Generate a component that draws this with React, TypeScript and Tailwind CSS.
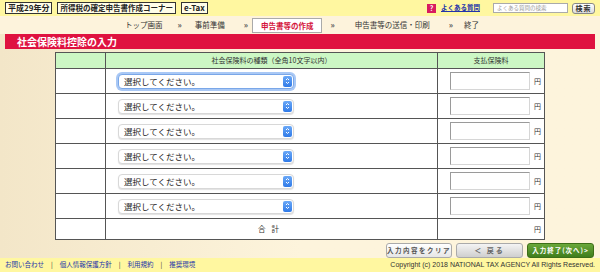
import React from 'react';

const FONT = '"Noto Sans CJK JP", "Noto Sans", "Liberation Sans", sans-serif';

const rows = [0, 1, 2, 3, 4, 5];

const SelectBox: React.FC<{ focused?: boolean }> = ({ focused }) => (
  <div
    className={`ml-[12px] flex h-[15px] w-[176px] items-center justify-between rounded-[4px] border bg-white pl-[5px] pr-[1px] ${
      focused ? 'border-[#7aa7e8] shadow-[0_0_0_2px_#a9c8f5]' : 'border-[#d8d8d8] shadow-[0_1px_1px_rgba(0,0,0,0.12)]'
    }`}
  >
    <span className="text-[8.5px] leading-none text-[#222]">選択してください。</span>
    <span className="flex h-[11px] w-[9px] flex-col items-center justify-center rounded-[2px] bg-gradient-to-b from-[#6aa8f7] to-[#2f7ae8]">
      <svg width="5" height="8" viewBox="0 0 5 8">
        <path d="M1 3 L2.5 1.5 L4 3 M1 5 L2.5 6.5 L4 5" stroke="#fff" strokeWidth="1" fill="none" />
      </svg>
    </span>
  </div>
);

const YenInput = () => (
  <div className="flex items-center justify-end pr-[3px]">
    <div className="h-[18px] w-[80px] border border-[#9a9a9a] border-r-[#d6d6d6] border-b-[#d6d6d6] bg-white" />
    <span className="ml-[4px] text-[7px] text-[#333]">円</span>
  </div>
);

export default function App() {
  return (
    <div
      className="flex h-[272px] w-[600px] flex-col overflow-hidden bg-gradient-to-r from-[#f3e6c8] via-[#fdf4dc] to-[#fdf4dc] text-[#333]"
      style={{ fontFamily: FONT }}
    >
      {/* top bar */}
      <div className="flex h-[16px] items-center bg-[#fff7a0] pl-[5px] pr-[5px]">
        <span className="border border-[#333] bg-[#fffde8] px-[2px] text-[8px] font-bold leading-[10px] text-[#222]">平成29年分</span>
        <span className="ml-[5px] border border-[#333] bg-[#fffde8] px-[2px] text-[7.5px] font-bold leading-[10px] text-[#222]">所得税の確定申告書作成コーナー</span>
        <span className="ml-[5px] border border-[#333] bg-[#fffde8] px-[2px] text-[8px] font-bold leading-[10px] text-[#222]">e-Tax</span>
        <div className="ml-auto flex items-center">
          <span className="flex h-[9px] w-[9px] items-center justify-center bg-[#d81b60] text-[7px] font-bold leading-none text-white">?</span>
          <span className="ml-[5px] text-[6.5px] font-bold text-[#2233aa] underline">よくある質問</span>
          <div className="ml-[13px] flex h-[10px] w-[75px] items-center border border-[#aaa] bg-white pl-[3px] text-[5.5px] text-[#999]">よくある質問の検索</div>
          <div className="ml-[4px] flex h-[11px] w-[23px] items-center justify-center rounded-[3px] border border-[#888] bg-gradient-to-b from-[#ffffff] to-[#dcdcdc] text-[7px] font-bold tracking-[1px] text-[#333]">検索</div>
        </div>
      </div>

      {/* nav */}
      <div className="flex h-[18px] items-center bg-[#fdf3dc] pl-[125px] text-[7.5px] text-[#333]">
        <span>トップ画面</span>
        <span className="ml-[15px] text-[8px] font-bold text-[#555]">»</span>
        <span className="ml-[13px]">事前準備</span>
        <span className="ml-[19px] text-[8px] font-bold text-[#555]">»</span>
        <span className="ml-[4px] border border-[#aaa] bg-white px-[8px] font-bold leading-[13px] text-[#d4143c]">申告書等の作成</span>
        <span className="ml-[8px] text-[8px] font-bold text-[#555]">»</span>
        <span className="ml-[20px]">申告書等の送信・印刷</span>
        <span className="ml-[19px] text-[8px] font-bold text-[#555]">»</span>
        <span className="ml-[11px]">終了</span>
      </div>

      {/* title */}
      <div className="mx-[5px] flex h-[15px] items-center bg-[#df1240] pl-[12px] text-[10px] font-bold text-white">社会保険料控除の入力</div>

      {/* table */}
      <div className="mt-[3px] pl-[55px]">
        <table className="w-[490px] border-collapse text-[7px] text-[#333]">
          <thead>
            <tr className="h-[16px] bg-[#ccf7c4]">
              <th className="w-[50px] border border-[#555]" />
              <th className="w-[332px] border border-[#555] font-normal">社会保険料の種類（全角10文字以内）</th>
              <th className="border border-[#555] font-normal">支払保険料</th>
            </tr>
          </thead>
          <tbody className="bg-white">
            {rows.map((r) => (
              <tr key={r} className="h-[25px]">
                <td className="border border-[#555]" />
                <td className="border border-[#555]">
                  <SelectBox focused={r === 0} />
                </td>
                <td className="border border-[#555]">
                  <YenInput />
                </td>
              </tr>
            ))}
            <tr className="h-[21px]">
              <td className="border border-[#555]" />
              <td className="border border-[#555] text-center text-[7.5px] tracking-[6px]">合計</td>
              <td className="border border-[#555] pr-[3px] text-right text-[7px]">円</td>
            </tr>
          </tbody>
        </table>
      </div>

      {/* buttons */}
      <div className="mt-[3px] flex justify-end gap-[4px] pr-[6px]">
        <div className="flex h-[15px] w-[66px] items-center justify-center rounded-[3px] border border-[#aaa] bg-gradient-to-b from-white to-[#e6e6e6] text-[6.5px] font-bold tracking-[1.5px] text-[#555]">入力内容をクリア</div>
        <div className="flex h-[15px] w-[67px] items-center justify-center rounded-[3px] border border-[#aaa] bg-gradient-to-b from-[#f4f4f4] to-[#cfcfcf] text-[7px] font-bold tracking-[2px] text-[#666]">＜ 戻る</div>
        <div className="flex h-[15px] w-[67px] items-center justify-center rounded-[3px] border border-[#3d6e18] bg-gradient-to-b from-[#6aa83a] to-[#3f7d1c] text-[6.5px] font-bold tracking-[1px] text-white">入力終了(次へ)&gt;</div>
      </div>

      {/* footer */}
      <div className="mt-auto flex h-[14px] items-center bg-[#fff7a0] pl-[5px] pr-[5px] text-[6.5px]">
        <span className="text-[#2233aa]">お問い合わせ</span>
        <span className="mx-[7px] text-[#333]">|</span>
        <span className="text-[#2233aa]">個人情報保護方針</span>
        <span className="mx-[7px] text-[#333]">|</span>
        <span className="text-[#2233aa]">利用規約</span>
        <span className="mx-[7px] text-[#333]">|</span>
        <span className="text-[#2233aa]">推奨環境</span>
        <span className="ml-auto text-[7px] text-[#333]" style={{ fontFamily: '"Liberation Sans", sans-serif' }}>Copyright (c) 2018 NATIONAL TAX AGENCY All Rights Reserved.</span>
      </div>
    </div>
  );
}
